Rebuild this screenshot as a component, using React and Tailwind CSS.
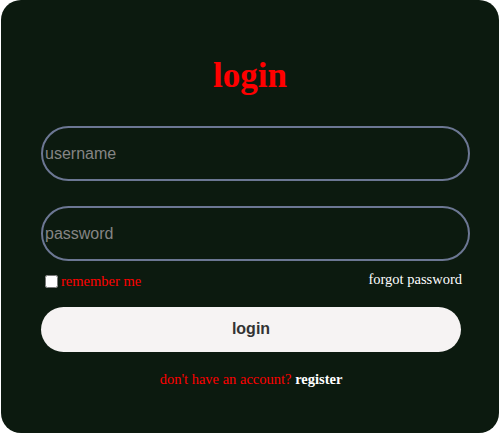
export default function App() {
    return (
        <div className="min-h-[434px] w-[500px] bg-white">
            <div className="ml-px h-[433px] w-[498px] rounded-[20px] bg-[#0c1a0f] px-10 pt-[58px]">
                <h1 className="text-center text-[35px] font-bold leading-9 text-[#ff0000] [font-family:'Liberation_Serif',serif]">
                    login
                </h1>

                <form className="mt-[32px]">
                    <input
                        type="text"
                        placeholder="username"
                        className="block h-[55px] w-[429px] rounded-full border-2 border-[#6c7793] bg-transparent px-0.5 text-base text-[#bbb] placeholder-[#858585] outline-none [font-family:'Liberation_Sans',sans-serif]"
                    />
                    <input
                        type="password"
                        placeholder="password"
                        className="mt-[25px] block h-[55px] w-[429px] rounded-full border-2 border-[#6c7793] bg-transparent px-0.5 text-base text-[#bbb] placeholder-[#858585] outline-none [font-family:'Liberation_Sans',sans-serif]"
                    />

                    <div className="mt-[8px] flex w-[421px] items-start justify-between pl-1 text-[14.5px] [font-family:'Liberation_Serif',serif]">
                        <label className="flex items-center gap-[3px] pt-[2px] text-[#ff0000]">
                            <input type="checkbox" className="h-[13px] w-[13px]" />
                            <span>remember me</span>
                        </label>
                        <a href="#" className="text-white">forgot password</a>
                    </div>

                    <button
                        type="submit"
                        className="mt-[14px] block h-[45px] w-[420px] rounded-full bg-[#f6f3f3] text-base font-bold text-[#333] [font-family:'Liberation_Sans',sans-serif]"
                    >
                        login
                    </button>

                    <p className="mt-[17px] w-[420px] text-center text-[14.5px] text-[#ff0000] [font-family:'Liberation_Serif',serif]">
                        don't have an account? <a href="#" className="font-bold text-white">register</a>
                    </p>
                </form>
            </div>
        </div>
    );
}
